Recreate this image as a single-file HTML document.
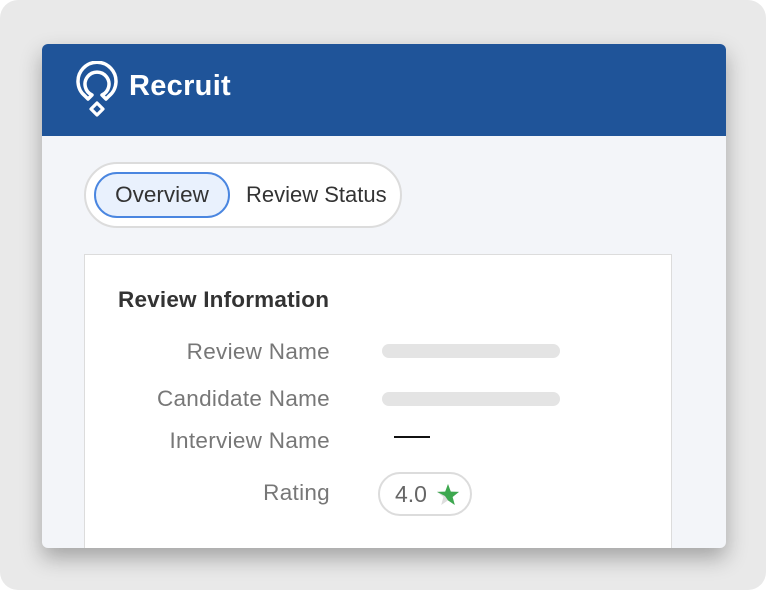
<!DOCTYPE html>
<html><head><style>
*{margin:0;padding:0;box-sizing:border-box}
html,body{width:766px;height:592px;overflow:hidden;background:#fff}
body{font-family:"Liberation Sans",sans-serif}
.bg{position:absolute;left:0;top:0;width:766px;height:590px;background:#e9e9e9;border-radius:18px}
.card{position:absolute;left:42px;top:44px;width:684px;height:504px;background:#f3f5f9;border-radius:6px;overflow:hidden;box-shadow:0 10px 22px rgba(0,0,0,.3)}
.hdr{position:absolute;left:0;top:0;width:684px;height:92px;background:#1f5499}
.brand{position:absolute;left:87px;top:26px;color:#fff;font-size:29px;font-weight:bold;letter-spacing:.3px}
.tabs{position:absolute;left:42px;top:118px;width:318px;height:66px;background:#fff;border:2px solid #dcdcdc;border-radius:33px}
.ov{position:absolute;left:8px;top:8px;width:136px;height:46px;border:2px solid #4a86e0;background:#e9f1fd;border-radius:23px;font-size:22.5px;color:#333;text-align:center;line-height:42px}
.rs{position:absolute;left:160px;top:8px;font-size:22px;color:#333;line-height:46px}
.panel{position:absolute;left:42px;top:210px;width:588px;height:320px;background:#fff;border:1px solid #dcdcdc}
.t{position:absolute;left:33px;top:32px;font-size:22.5px;font-weight:bold;color:#333;letter-spacing:.2px}
.lb{position:absolute;right:341px;font-size:22.5px;letter-spacing:.3px;color:#777;white-space:nowrap}
.bar{position:absolute;left:297px;width:178px;height:14px;background:#e4e4e4;border-radius:7px}
.rate{position:absolute;left:293px;top:217px;width:94px;height:44px;border:2px solid #dcdcdc;border-radius:22px;font-size:23px;color:#666;line-height:40px;padding-left:15px}
</style></head><body>
<div class="bg"></div>
<div class="card">
 <div class="hdr">
  <svg style="position:absolute;left:30px;top:17px" width="50" height="56" viewBox="0 0 50 56">
   <path d="M16 38 L13 35 A19 19 0 1 1 37 35 L34 38 L30 34 A12 12 0 1 0 20 34 Z" fill="none" stroke="#fff" stroke-width="3.5" stroke-linejoin="round"/>
   <path d="M25 42 L31 48 L25 54 L19 48 Z" fill="none" stroke="#fff" stroke-width="3.2" stroke-linejoin="round"/>
  </svg>
  <div class="brand">Recruit</div>
 </div>
 <div class="tabs"><div class="ov">Overview</div><div class="rs">Review Status</div></div>
 <div class="panel">
  <div class="t">Review Information</div>
  <div class="lb" style="top:84px">Review Name</div>
  <div class="bar" style="top:89px"></div>
  <div class="lb" style="top:131px">Candidate Name</div>
  <div class="bar" style="top:137px"></div>
  <div class="lb" style="top:173px">Interview Name</div>
  <div style="position:absolute;left:309px;top:181px;width:36px;height:2px;background:#111"></div>
  <div class="lb" style="top:225px">Rating</div>
  <div class="rate">4.0<svg style="position:absolute;left:56px;top:9px" width="24" height="24" viewBox="0 0 24 24"><path d="M12 1 L14.8 8.6 L23 8.9 L16.6 14 L18.8 22 L12 17.4 L5.2 22 L7.4 14 L1 8.9 L9.2 8.6 Z" fill="#ddd"/><path d="M12 1 L14.8 8.6 L23 8.9 L16.6 14 L18.8 22 L12 17.4 L9 13 L1 8.9 L9.2 8.6 Z" fill="#3da84f"/></svg></div>
 </div>
</div>
</body></html>
